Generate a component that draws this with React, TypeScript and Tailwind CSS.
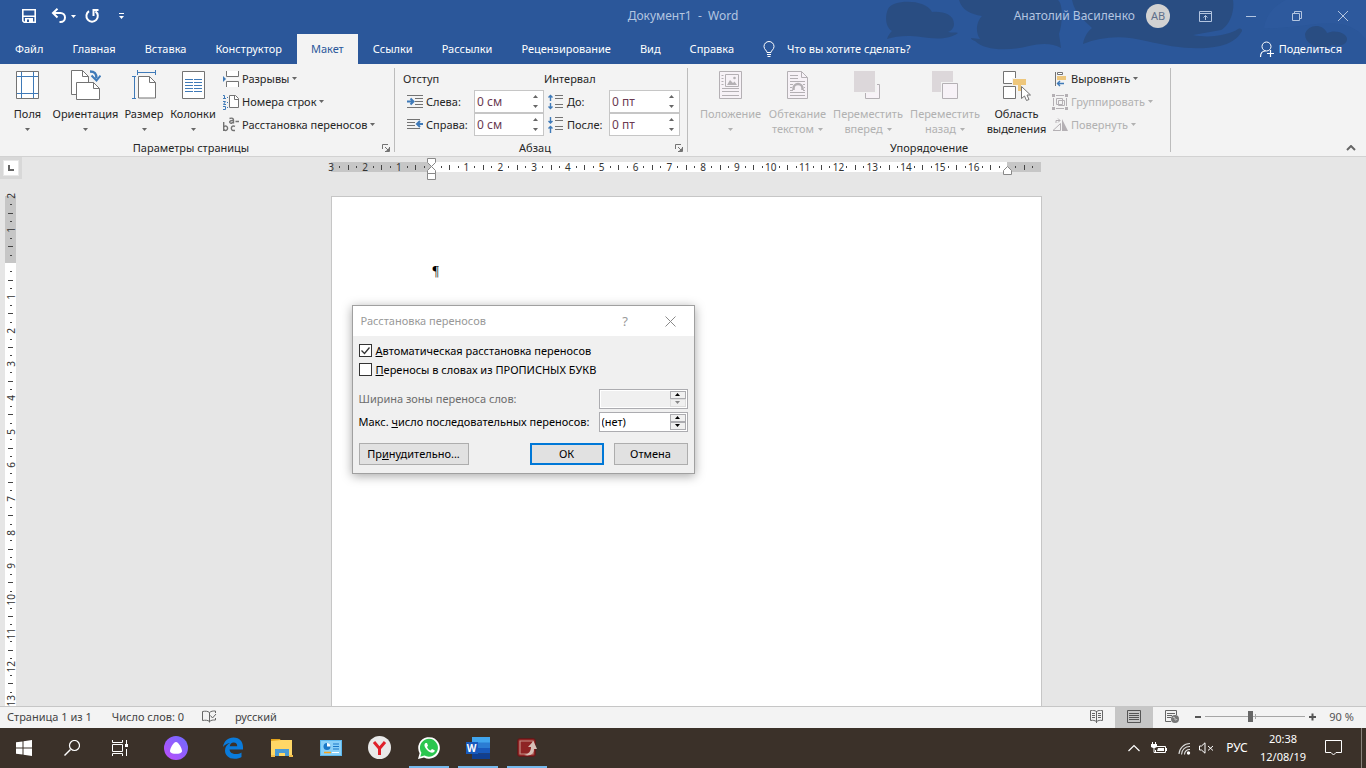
import { ReactNode } from 'react';

const Tabs = ['Файл', 'Главная', 'Вставка', 'Конструктор', 'Макет', 'Ссылки', 'Рассылки', 'Рецензирование', 'Вид', 'Справка'];

// Labels for every centimetre, empty where the margin ends

const HorizontalMarks = ['3', '2', '1', '', '1', '2', '3', '4', '5', '6', '7', '8', '9', '10', '11', '12', '13', '14', '15', '16', ''];
const VerticalMarks = ['2', '1', '', '1', '2', '3', '4', '5', '6', '7', '8', '9', '10', '11', '12', '13'];

interface IconProps {

    W: number;

    H: number;

    children: ReactNode;

}

function Icon({ W, H, children }: IconProps) {

    return (

        <svg width={W} height={H} viewBox={`0 0 ${W} ${H}`} fill="none" className="shrink-0" aria-hidden="true">
            {children}
        </svg>

    );

}

function Caret() {

    return (

        <svg width="5" height="3" viewBox="0 0 5 3" className="shrink-0" aria-hidden="true">
            <path d="M0 0h5L2.500 3z" fill="currentColor" />
        </svg>

    );

}

const Dim = '#b4b0b4';

const MarginsIcon = (
    <Icon W={24} H={30}>
        <path d="M.5 1.500h22v27H.5z" fill="#fff" stroke="#737373" />
        <path d="M5.500 2v26M17.500 2v26M1 6.500h21M1 23.500h21" stroke="#3f7ab8" />
    </Icon>
);

const OrientationIcon = (
    <Icon W={30} H={32}>
        <path d="M5 24.500H.5v-24h11l6 6V12" fill="#fff" stroke="#737373" />
        <path d="M11.500.5v6h6" stroke="#737373" />
        <path d="M5.500 12.500h17l6 6v11h-23z" fill="#fff" stroke="#737373" />
        <path d="M22.500 12.500v6h6" stroke="#737373" />
        <path d="M19 1.500c5 0 6.500 2 6.500 7" stroke="#3f7ab8" strokeWidth="2.500" />
        <path d="M20.500 5.500l5 5 4-5" stroke="#3f7ab8" strokeWidth="2" />
    </Icon>
);

const SizeIcon = (
    <Icon W={25} H={31}>
        <path d="M5 2.500h19M5.500 0v5M23.500 0v5M2.500 7v22M0 6.500h4M0 28.500h4" stroke="#3f7ab8" />
        <path d="M6.500 6.500h11l6 6v15.500h-17z" fill="#fff" stroke="#737373" />
        <path d="M17.500 6.500v6h6" stroke="#737373" />
    </Icon>
);

const ColumnsIcon = (
    <Icon W={23} H={30}>
        <path d="M.5 1.500h22v27H.5z" fill="#fff" stroke="#737373" />
        <path d="M3 9.500h8M12 9.500h8M3 12.500h8M12 12.500h8M3 15.500h8M12 15.500h8M3 18.500h8M12 18.500h8M3 21.500h8M12 21.500h8" stroke="#3f7ab8" />
    </Icon>
);

const BreaksIcon = (
    <Icon W={16} H={16}>
        <path d="M3.500 0v5.500h12V0M3.500 16v-5.500h12V16" fill="#fff" stroke="#737373" />
        <path d="M0 5l3 3-3 3z" fill="#3f7ab8" />
        <path d="M4 8h12" stroke="#fff" />
    </Icon>
);

const LineNumbersIcon = (
    <Icon W={16} H={16}>
        <path d="M6.500 1.500h6l3 3v9h-9z" fill="#fff" stroke="#737373" />
        <path d="M11.500 1.500v4h4" stroke="#737373" />
        <path d="M0 1.500h1.500V5M0 4.500h3M0 7.500h2.500L.5 10.500H3M0 12.500h2.500v3H0" stroke="#3f7ab8" />
        <path d="M4 3.500h2M4 8.500h2M4 13.500h2" stroke="#3f7ab8" strokeDasharray="1 1" />
    </Icon>
);

const HyphenationIcon = (
    <Icon W={16} H={16}>
        <path d="M.7 5v9M.7 10.500a2 2.200 0 1 1 0 1.500M12 9.300c-4-1.800-5 4.200-1.500 4.200H12M6.500 1.500c3-1 4 0 4 1.500v3.500M10.500 3.500c-5-.5-4.500 3-2 2.700l2-1.200M12.500 4.500H16" stroke="#737373" strokeWidth="1.400" />
    </Icon>
);

const IndentLeftIcon = (
    <Icon W={16} H={14}>
        <path d="M0 .5h16M8 3.500h8M8 6.500h8M8 9.500h8M0 12.500h16" stroke="#737373" />
        <path d="M0 6.500h6M3.500 3.500l3 3-3 3" stroke="#3f7ab8" strokeWidth="2" />
    </Icon>
);

const IndentRightIcon = (
    <Icon W={16} H={14}>
        <path d="M0 1.500h13M0 4.500h8M0 7.500h8M0 10.500h13" stroke="#737373" />
        <path d="M10 6h6M13 3l-3 3 3 3" stroke="#3f7ab8" strokeWidth="2" />
    </Icon>
);

const SpaceBeforeIcon = (
    <Icon W={16} H={16}>
        <path d="M7 1.500h8M7 4.500h8M7 10.500h8M7 13.500h8" stroke="#737373" />
        <path d="M2.500 1v6M.5 3.500l2-2 2 2M2.500 9v6M.5 12.500l2 2 2-2" stroke="#3f7ab8" strokeWidth="1.400" />
    </Icon>
);

const SpaceAfterIcon = (
    <Icon W={16} H={16}>
        <path d="M7 .5h8M7 3.500h8M7 9.500h8M7 12.500h8" stroke="#737373" />
        <path d="M2.500 0v6M.5 4l2 2 2-2M2.500 9v7M.5 11.500l2-2 2 2" stroke="#3f7ab8" strokeWidth="1.400" />
    </Icon>
);

const PositionIcon = (
    <Icon W={24} H={30}>
        <path d="M.5 1.500h22v27H.5z" fill="#f7f2f7" stroke={Dim} />
        <path d="M6.500 4.500h13v12h-13z" stroke={Dim} />
        <path d="M8 15l3-5 3 3 1.500-1.500L18 15z" fill={Dim} />
        <circle cx="15.500" cy="8" r="1.300" fill={Dim} />
        <path d="M2.500 5.500h2M2.500 8.500h2M2.500 11.500h2M2.500 14.500h2M3 18.500h17M3 21.500h17M3 25.500h17" stroke={Dim} />
    </Icon>
);

const WrapIcon = (
    <Icon W={24} H={30}>
        <path d="M1.500 1.500h14l6 6v21h-20z" fill="#f7f2f7" stroke={Dim} />
        <path d="M15.500 1.500v6h6M4 5.500h8M4 8.500h8M4 11.500h15M4 25.500h15M4 22.500h15M4 14.500h3M17 14.500h2M4 17.500h2M18 17.500h1M4 20.500h3M17 20.500h2" stroke={Dim} />
        <path d="M7.500 20v-1.500a4.500 4.500 0 0 1 9 0V20" stroke={Dim} strokeWidth="2.500" />
    </Icon>
);

const ForwardIcon = (
    <Icon W={28} H={30}>
        <path d="M11.500 14.500h14v14h-14z" fill="#f7f2f7" stroke={Dim} />
        <path d="M0 0h23v23H0z" fill="#f3f3f3" />
        <path d="M0 1h21v21H0z" fill="#dcd7da" />
    </Icon>
);

const BackwardIcon = (
    <Icon W={28} H={30}>
        <path d="M1 1h21v21H1z" fill="#dcd7da" />
        <path d="M10 12h17v17H10z" fill="#f3f3f3" />
        <path d="M11.500 13.500h15v15h-15z" fill="#f7f2f7" stroke={Dim} />
    </Icon>
);

const SelectionIcon = (
    <Icon W={28} H={32}>
        <path d="M.5 1.500h12v12H.5zM.5 16.500h12v12H.5z" fill="#fff" stroke="#737373" />
        <path d="M9 8h15v8h-5v6h-5v-6H9z" fill="#f3f3f3" />
        <path d="M10 9h13v6h-5v6h-3v-6h-5z" fill="#eec77c" />
        <path d="M18.500 16.500v12l3-2.500 2 4.500 2.500-1-2-4.500h3.500z" fill="#fff" stroke="#737373" />
    </Icon>
);

const AlignIcon = (
    <Icon W={16} H={16}>
        <path d="M3.500 1v14" stroke="#737373" />
        <path d="M5.500 1.500h5v2h-5z" fill="#fff" stroke="#737373" />
        <path d="M5 5h9v4H5z" fill="#eec77c" />
        <path d="M5 12.500h7M8 10l-2.500 2.500L8 15" stroke="#3f7ab8" strokeWidth="1.400" />
    </Icon>
);

const GroupIcon = (
    <Icon W={16} H={16}>
        <path d="M4.500 4.500h6v6h-6zM6.500 6.500h6v5h-6zM4 1.500h8M4 14.500h8M1.500 4v8M14.500 4v8" stroke={Dim} />
        <path d="M0 0h3v3H0zM13 0h3v3h-3zM0 13h3v3H0zM13 13h3v3h-3z" fill={Dim} />
    </Icon>
);

const RotateIcon = (
    <Icon W={16} H={14}>
        <path d="M1 12.500h7.500v-7z" stroke={Dim} />
        <path d="M10 1v12h6z" fill={Dim} />
        <path d="M4 5V2.500h4M6 .5l2 2-2 2" stroke={Dim} />
    </Icon>
);

function TitleBar() {

    return (

        <div className="relative grid h-8 grid-cols-[1fr_auto_1fr] items-center text-[12px] text-[#b3c5e0]">

            <div className="flex items-center text-white">
                <button aria-label="Сохранить" className="ml-[21px]">
                    <Icon W={16} H={16}>
                        <path d="M1.800 1.800h12.400v12.400H3.200l-1.400-1.400z" stroke="#fff" strokeWidth="1.600" />
                        <path d="M2 7.500h12v1.500H2zM4 10h8v4H4z" fill="#fff" />
                        <path d="M6 11.500h2V14H6z" fill="#2b579a" />
                    </Icon>
                </button>
                <button aria-label="Отменить" className="ml-[14px] flex items-center gap-1">
                    <Icon W={16} H={16}>
                        <path d="M2 5h7.500a4.300 4.300 0 0 1 0 9H8.500M6.500.800L2 5l4.500 4.500" stroke="#fff" strokeWidth="2" />
                    </Icon>
                    <Caret />
                </button>
                <button aria-label="Повторить" className="ml-2">
                    <Icon W={16} H={16}>
                        <path d="M5 3.200a5.700 5.700 0 1 0 6.500.2M9.500 8V2h5" stroke="#fff" strokeWidth="2" />
                    </Icon>
                </button>
                <button aria-label="Настройка панели быстрого доступа" className="ml-[18px]">
                    <Icon W={7} H={7}>
                        <path d="M1 .5h5" stroke="#fff" />
                        <path d="M1 3h5L3.500 6z" fill="#fff" />
                    </Icon>
                </button>
            </div>

            <div className="whitespace-pre">Документ1  -  Word</div>

            <div className="flex items-center justify-end">
                <span className="mr-[11px] whitespace-nowrap">Анатолий Василенко</span>
                <span className="mr-3 flex size-6 items-center justify-center rounded-full bg-[#d2d2d2] text-[11px] text-[#5f6f8a]">АВ</span>
                <button aria-label="Параметры ленты" className="flex w-[46px] justify-center">
                    <Icon W={13} H={11}>
                        <path d="M.5.500h12v10H.5zM.5 2.500h12M6.500 9V4.500M4.500 6.500l2-2 2 2" stroke="currentColor" />
                    </Icon>
                </button>
                <button aria-label="Свернуть" className="flex w-[46px] justify-center">
                    <Icon W={10} H={10}><path d="M0 5.500h10" stroke="currentColor" /></Icon>
                </button>
                <button aria-label="Восстановить" className="flex w-[46px] justify-center">
                    <Icon W={10} H={10}><path d="M.5 2.500h7v7h-7zM2.500 2V.5h7v7H8" stroke="currentColor" /></Icon>
                </button>
                <button aria-label="Закрыть" className="flex w-[46px] justify-center">
                    <Icon W={10} H={10}><path d="M0 0l10 10M10 0L0 10" stroke="currentColor" /></Icon>
                </button>
            </div>

        </div>

    );

}

function Header() {

    return (

        <header className="relative bg-[#2b579a]">

            {/* Cloud pattern of the window frame */}

            <svg className="absolute top-0 right-0" width="506" height="64" viewBox="0 0 506 64" aria-hidden="true">
                <path d="M404 28c4-32 50-40 62-28h40v40c-20-30-60-10-102-12z" fill="#3461a8" opacity=".25" />
                <g fill="#294d82">
                    <path d="M28 9c5-10 38-10 44 3 10-1 22 2 22 12 0 4-3 7-6 8 4 1 8 0 10 1-9 7-24 6-37 4-14-2-24-1-34 2 1-4 4-7 5-8-7-4-7-15-4-22z" />
                    <path d="M99 0h99c5 4 5 22 1 34l2 14c-8-5-20-5-32-2-20 5-44 5-54-5-3-1-4-2-4-3l9 1c-6-9-2-19 2-23-12-2-20-6-23-16z" />
                    <path d="M212 0h161c2 12-4 26-12 30l-28 5c18 4 38-1 45-6 3-1 4 0 4 2-4 8-13 13-22 15-24 5-48 1-74-5-22-6-44-5-63 3 1-7 5-13 9-16-8-8-17-14-20-28z" />
                    <path d="M445 34c3-10 18-11 22-1 8-4 20 0 20 6 0 6-8 8-15 6-8 6-27 2-27-11z" />
                </g>
            </svg>

            <TitleBar />

            <nav className="relative flex h-8 items-end gap-px pl-px text-white">

                {Tabs.map((Tab) => (

                    <button key={Tab} className={`h-[30px] px-[14px] ${Tab == 'Макет' ? 'bg-[#f3f3f3] text-[#2b579a]' : 'text-white'}`}>
                        {Tab}
                    </button>

                ))}

                <button className="ml-[14px] flex h-[30px] items-center gap-3">
                    <Icon W={12} H={16}>
                        <path d="M4 11.500c0-2-3-3-3-6a5 5 0 0 1 10 0c0 3-3 4-3 6zM4 13.500h4M4.500 15.500h3" stroke="#fff" />
                    </Icon>
                    Что вы хотите сделать?
                </button>

                <button className="mr-6 ml-auto flex h-[30px] items-center gap-1">
                    <Icon W={16} H={16}>
                        <circle cx="7.500" cy="5.500" r="4.500" stroke="#fff" />
                        <path d="M1.500 16c0-4 2-6 5-6M8 12.500h7M11.500 9v7" stroke="#fff" strokeWidth="1.200" />
                    </Icon>
                    Поделиться
                </button>

            </nav>

        </header>

    );

}

interface BigButtonProps {

    Glyph: ReactNode;

    Lines: string[];

    Disabled?: boolean;

    HasCaret?: boolean;

}

function BigButton({ Glyph, Lines, Disabled = false, HasCaret = true }: BigButtonProps) {

    return (

        <button disabled={Disabled} className={`flex flex-col items-center whitespace-nowrap leading-4 ${Disabled ? 'text-[#b1b1b1]' : 'text-[#262626]'}`}>

            <span className="mb-1 flex h-8">{Glyph}</span>

            <span>{Lines[0]}</span>

            <span className="flex h-[14px] items-center gap-1">
                {Lines[1]}
                {HasCaret && <span className={Disabled ? 'text-[#b1b1b1]' : 'text-[#666]'}><Caret /></span>}
            </span>

        </button>

    );

}

function SmallButton({ Glyph, Label, Disabled = false }: { Glyph: ReactNode; Label: string; Disabled?: boolean }) {

    return (

        <button disabled={Disabled} className={`flex h-[23px] items-center gap-[3px] whitespace-nowrap ${Disabled ? 'text-[#b1b1b1]' : 'text-[#262626]'}`}>
            {Glyph}
            {Label}
            <span className={Disabled ? 'text-[#b1b1b1]' : 'text-[#666]'}><Caret /></span>
        </button>

    );

}

function GroupTitle({ Text, Launcher = true }: { Text: string; Launcher?: boolean }) {

    return (

        <div className="flex h-4 items-center text-[#262626]">
            <span className="flex-1 text-center">{Text}</span>
            {Launcher && (
                <button aria-label={`Параметры: ${Text}`} className="mr-1">
                    <Icon W={8} H={8}>
                        <path d="M.5 5V.5H6M3 3l3.500 3.500M7.500 3v4.500H3" stroke="#737373" />
                        <path d="M4 7h3V4z" fill="#737373" />
                    </Icon>
                </button>
            )}
        </div>

    );

}

function Separator() {

    return <i className="mt-px mb-1 w-px bg-[#bcbcbc]" />;

}

function SpinField({ Id, Glyph, Label, Value }: { Id: string; Glyph: ReactNode; Label: string; Value: string }) {

    return (

        <>
            <label htmlFor={Id} className="flex items-center gap-[3px] whitespace-nowrap">
                {Glyph}
                {Label}
            </label>

            <div className="flex h-[23px] border border-[#c6c6c6] bg-white">
                <input id={Id} defaultValue={Value} className="w-0 flex-1 px-0.5 text-[12px] text-[#6b3a52] outline-none" />
                <div className="flex w-4 flex-col items-center justify-between py-1 text-[#666]">
                    <button aria-label="Увеличить" className="rotate-180"><Caret /></button>
                    <button aria-label="Уменьшить"><Caret /></button>
                </div>
            </div>
        </>

    );

}

function Ribbon() {

    return (

        <section className="flex h-[93px] border-b border-[#d2d2d2] bg-[#f3f3f3] pt-[3px]">

            <div className="flex w-[394px] flex-col justify-between">

                <div className="flex">
                    <div className="grid grid-cols-[45px_71px_46px_52px] pt-[3px] pl-[5px]">
                        <BigButton Glyph={MarginsIcon} Lines={['Поля']} />
                        <BigButton Glyph={OrientationIcon} Lines={['Ориентация']} />
                        <BigButton Glyph={SizeIcon} Lines={['Размер']} />
                        <BigButton Glyph={ColumnsIcon} Lines={['Колонки']} />
                    </div>
                    <div className="ml-1">
                        <SmallButton Glyph={BreaksIcon} Label="Разрывы" />
                        <SmallButton Glyph={LineNumbersIcon} Label="Номера строк" />
                        <SmallButton Glyph={HyphenationIcon} Label="Расстановка переносов" />
                    </div>
                </div>

                <GroupTitle Text="Параметры страницы" />

            </div>

            <Separator />

            <div className="flex w-[292px] flex-col justify-between">

                <div className="grid grid-cols-[63px_70px_57px_71px] gap-x-1 pl-3 text-[#262626]">
                    <span className="col-span-2 -ml-1 h-[23px] leading-[23px]">Отступ</span>
                    <span className="col-span-2 -ml-1 h-[23px] leading-[23px]">Интервал</span>
                    <SpinField Id="indent-left" Glyph={IndentLeftIcon} Label="Слева:" Value="0 см" />
                    <SpinField Id="space-before" Glyph={SpaceBeforeIcon} Label="До:" Value="0 пт" />
                    <SpinField Id="indent-right" Glyph={IndentRightIcon} Label="Справа:" Value="0 см" />
                    <SpinField Id="space-after" Glyph={SpaceAfterIcon} Label="После:" Value="0 пт" />
                </div>

                <GroupTitle Text="Абзац" />

            </div>

            <Separator />

            <div className="flex w-[482px] flex-col justify-between">

                <div className="flex">
                    <div className="grid grid-cols-[69px_65px_76px_78px_65px] pt-[3px] pl-2">
                        <BigButton Glyph={PositionIcon} Lines={['Положение']} Disabled />
                        <BigButton Glyph={WrapIcon} Lines={['Обтекание', 'текстом']} Disabled />
                        <BigButton Glyph={ForwardIcon} Lines={['Переместить', 'вперед']} Disabled />
                        <BigButton Glyph={BackwardIcon} Lines={['Переместить', 'назад']} Disabled />
                        <BigButton Glyph={SelectionIcon} Lines={['Область', 'выделения']} HasCaret={false} />
                    </div>
                    <div className="ml-[3px]">
                        <SmallButton Glyph={AlignIcon} Label="Выровнять" />
                        <SmallButton Glyph={GroupIcon} Label="Группировать" Disabled />
                        <SmallButton Glyph={RotateIcon} Label="Повернуть" Disabled />
                    </div>
                </div>

                <GroupTitle Text="Упорядочение" Launcher={false} />

            </div>

            <Separator />

            <button aria-label="Свернуть ленту" className="mr-[10px] mb-[5px] ml-auto self-end">
                <Icon W={10} H={6}><path d="M1 5l4-4 4 4" stroke="#666" strokeWidth="2" /></Icon>
            </button>

        </section>

    );

}

function HorizontalRuler() {

    return (

        <div className="relative flex h-[10px] w-[710px] text-[10px] leading-[10px] text-[#333]">

            {HorizontalMarks.map((Mark, Index) => (

                <div key={Index} className={`w-0 flex-1 ${Index < 3 || Index == 20 ? 'bg-[#c6c6c6]' : 'bg-white'}`}>

                    <div className="mr-1 -ml-1 grid h-full grid-cols-4 items-center justify-items-center">
                        <span className="flex w-0 justify-center">{Mark}</span>
                        <i className="h-0.5 w-px bg-[#444]" />
                        <i className="h-[5px] w-px bg-[#444]" />
                        <i className="h-0.5 w-px bg-[#444]" />
                    </div>

                </div>

            ))}

            {/* Indent markers */}

            <svg className="absolute -top-1 left-[96px]" width="9" height="22" viewBox="0 0 9 22" aria-hidden="true">
                <path d="M.5.500h8v4l-4 4-4-4zM.5 15.500v-3l4-4 4 4v3zM.5 15.500h8v6h-8z" fill="#fff" stroke="#888" />
            </svg>

            <svg className="absolute top-1 right-[29px]" width="9" height="9" viewBox="0 0 9 9" aria-hidden="true">
                <path d="M.5 8.500v-4l4-4 4 4v4z" fill="#fff" stroke="#888" />
            </svg>

        </div>

    );

}

function VerticalRuler() {

    return (

        <div className="flex h-[538px] w-[11px] shrink-0 flex-col text-[10px] leading-[10px] text-[#333]">

            {VerticalMarks.map((Mark, Index) => (

                <div key={Index} className={`h-0 flex-1 ${Index < 2 ? 'bg-[#c6c6c6]' : 'bg-white'}`}>

                    <div className="-mt-1 grid h-full grid-rows-4 items-center justify-items-center">
                        <span className="flex h-0 items-center">
                            <span className="rotate-180 [writing-mode:vertical-rl]">{Mark}</span>
                        </span>
                        <i className="h-px w-0.5 bg-[#444]" />
                        <i className="h-px w-[5px] bg-[#444]" />
                        <i className="h-px w-0.5 bg-[#444]" />
                    </div>

                </div>

            ))}

        </div>

    );

}

function DialogSpin({ Id, Value, Disabled = false }: { Id: string; Value: string; Disabled?: boolean }) {

    return (

        <div className="flex h-5 w-[89px] border border-[#acacb0] bg-white p-px">
            <input id={Id} defaultValue={Value} disabled={Disabled} className="w-0 flex-1 px-px text-black outline-none disabled:bg-[#f0f0f0]" />
            <div className="flex w-4 flex-col">
                <button aria-label="Больше" className="flex flex-1 items-center justify-center border border-[#acacb0] bg-[#f0f0f0] text-black"><span className="rotate-180"><Caret /></span></button>
                <button aria-label="Меньше" disabled={Disabled} className="flex flex-1 items-center justify-center border border-[#acacb0] bg-[#f0f0f0] text-black disabled:border-[#ddd] disabled:text-[#888]"><Caret /></button>
            </div>
        </div>

    );

}

function DialogCheck({ Checked, Hot, Rest }: { Checked: boolean; Hot: string; Rest: string }) {

    return (

        <label className="flex h-[19px] items-center gap-1">
            <span className="relative flex">
                <input type="checkbox" defaultChecked={Checked} className="peer size-[13px] appearance-none border border-[#333] bg-white" />
                <svg className="pointer-events-none absolute inset-0 hidden peer-checked:block" width="13" height="13" viewBox="0 0 13 13" aria-hidden="true">
                    <path d="M2.500 6.500l3 3 5-6" fill="none" stroke="#333" strokeWidth="1.300" />
                </svg>
            </span>
            <span><u>{Hot}</u>{Rest}</span>
        </label>

    );

}

function HyphenationDialog() {

    return (

        <div role="dialog" aria-label="Расстановка переносов" className="absolute top-[108px] left-5 w-[343px] border border-[#a0a0a0] bg-[#f0f0f0] text-black shadow-[0_2px_10px_rgba(0,0,0,0.35)]">

            <div className="flex h-[30px] items-center bg-white pl-2 text-[#999]">
                Расстановка переносов
                <button aria-label="Справка" className="ml-auto w-[45px] text-[13px]">?</button>
                <button aria-label="Закрыть" className="flex w-[46px] justify-center">
                    <Icon W={11} H={11}><path d="M.5.500l10 10M10.500.5l-10 10" stroke="#8a8a8a" /></Icon>
                </button>
            </div>

            <div className="px-[6px] pt-[5px] pb-2">

                <DialogCheck Checked Hot="А" Rest="втоматическая расстановка переносов" />
                <DialogCheck Checked={false} Hot="П" Rest="ереносы в словах из ПРОПИСНЫХ БУКВ" />

                <div className="mt-2 flex h-[23px] items-center justify-between text-[#6d6d6d]">
                    <label htmlFor="zone">Ширина зоны переноса слов:</label>
                    <DialogSpin Id="zone" Value="" Disabled />
                </div>

                <div className="flex h-[23px] items-center justify-between whitespace-nowrap">
                    <label htmlFor="limit">Макс. <u>ч</u>исло последовательных переносов:</label>
                    <DialogSpin Id="limit" Value="(нет)" />
                </div>

                <div className="mt-[10px] flex">
                    <button className="h-[22px] w-[110px] border border-[#adadad] bg-[#e1e1e1]">Пр<u>и</u>нудительно...</button>
                    <button className="mr-[10px] ml-auto h-[22px] w-[74px] border-2 border-[#0078d7] bg-[#e1e1e1]">ОК</button>
                    <button className="h-[22px] w-[74px] border border-[#adadad] bg-[#e1e1e1]">Отмена</button>
                </div>

            </div>

        </div>

    );

}

function Workspace() {

    return (

        <main className="flex min-h-0 flex-1 overflow-hidden bg-[#e6e6e6]">

            <div className="flex w-[22px] flex-col">
                <button aria-label="Табуляция" className="mb-[17px] flex h-[22px] w-full shrink-0 items-center justify-center bg-[#d8d8d8]">
                    <span className="flex size-4 items-center justify-center border border-[#e8e8e8] bg-white">
                        <Icon W={6} H={6}><path d="M1 0v5h5" stroke="#666" strokeWidth="2" /></Icon>
                    </span>
                </button>
                <div className="flex min-h-0 flex-1 pl-[5px]">
                    <VerticalRuler />
                </div>
            </div>

            <div className="flex flex-1 flex-col items-center pt-[5px] pr-4">
                <HorizontalRuler />
                <div className="relative mt-6 w-[711px] flex-1 border border-b-0 border-[#c6c6c6] bg-white">
                    <p className="pt-[67px] pl-[101px] font-['Liberation_Serif',serif] text-[14px] leading-4 text-black">¶</p>
                    <HyphenationDialog />
                </div>
            </div>

        </main>

    );

}

function StatusBar() {

    return (

        <footer className="flex h-[22px] items-stretch border-t border-[#c6c6c6] bg-[#f3f3f3] text-[#444]">

            <div className="flex items-center pb-0.5 pl-[7px]">
                <span>Страница 1 из 1</span>
                <span className="ml-5">Число слов: 0</span>
                <button aria-label="Проверка правописания" className="mx-[18px]">
                    <Icon W={15} H={13}>
                        <path d="M7.500 11.500c-2-1.500-4-1.500-7-1v-9c3-.5 5-.5 7 1v10M7.500 2.500c2-1.500 3-1.500 6-1.500v2M7.500 11.500c2-1.500 3-1.500 6-1.500V8M8.500 5.500l2 2.500 3.500-4" stroke="#666" />
                    </Icon>
                </button>
                <span>русский</span>
            </div>

            <div className="ml-auto flex items-stretch">
                <button aria-label="Режим чтения" className="flex w-[38px] items-center justify-center pb-0.5">
                    <Icon W={13} H={13}>
                        <path d="M6.500 11.500c-2-1-3-1.500-6-1V.5c3-.5 4 0 6 1 2-1 3-1.500 6-1v10c-3-.5-4 0-6 1zM6.500 1v12M2 3.500h3M2 5.500h3M2 7.500h3M8 3.500h3M8 5.500h3M8 7.500h3" stroke="#666" />
                    </Icon>
                </button>
                <button aria-label="Разметка страницы" className="flex w-[38px] items-center justify-center bg-[#c6c6c6] pb-0.5">
                    <Icon W={14} H={13}>
                        <path d="M.5.500h13v12H.5zM2 3.500h10M2 5.500h10M2 7.500h10M2 9.500h10" stroke="#555" />
                    </Icon>
                </button>
                <button aria-label="Веб-документ" className="flex w-[38px] items-center justify-center pb-0.5">
                    <Icon W={14} H={13}>
                        <path d="M6 11.500H.5V.5h11V5M2 3.500h8M2 5.500h5M2 7.500h4" stroke="#666" />
                        <circle cx="10" cy="9" r="4" fill="#777" />
                        <path d="M8 8c1-2 2 0 2 1s1 2 2 0" stroke="#ddd" />
                    </Icon>
                </button>
                <div className="ml-1 flex items-center pb-0.5 text-[#555]">
                    <button aria-label="Уменьшить масштаб"><Icon W={6} H={2}><path d="M0 1h6" stroke="#555" strokeWidth="2" /></Icon></button>
                    <span className="relative mx-1 flex w-[100px]">
                        <input type="range" aria-label="Масштаб" min={0} max={100} defaultValue={45} className="h-[11px] w-full appearance-none bg-[linear-gradient(#a6a6a6,#a6a6a6)] bg-[length:100%_1px] bg-center bg-no-repeat [&::-webkit-slider-thumb]:h-[11px] [&::-webkit-slider-thumb]:w-[5px] [&::-webkit-slider-thumb]:appearance-none [&::-webkit-slider-thumb]:bg-[#666]" />
                        <i className="absolute top-[3px] left-1/2 h-[5px] w-px bg-[#a6a6a6]" />
                    </span>
                    <button aria-label="Увеличить масштаб"><Icon W={8} H={8}><path d="M0 4h7M3.500.5v7" stroke="#555" strokeWidth="2" /></Icon></button>
                    <button className="w-[49px] text-center">90 %</button>
                </div>
            </div>

        </footer>

    );

}

const PinnedApps: { Name: string; Open?: boolean; Glyph: ReactNode }[] = [

    {
        Name: 'Edge',
        Glyph: (
            <Icon W={22} H={22}>
                <path d="M1 10C2 4 6 .5 11.500.5 18 .5 21 5 21 10v2.500H7.500c.3 3 3 4.500 6 4.500 2.500 0 4.500-.7 6-1.600v4.500C18 21 15.500 21.800 12.500 21.800 6.500 21.800 3 18 3 13.500 3 10 5 7.500 8 6 5 6.500 2.500 8 1 10zm6.800-.8h7.400C15.200 6.800 14 5.500 11.700 5.500 9.500 5.500 8 7 7.800 9.200z" fill="#0a7bdb" />
            </Icon>
        ),
    },
    {
        Name: 'Проводник',
        Glyph: (
            <Icon W={22} H={20}>
                <path d="M0 1h9l1 2H0z" fill="#e2a31c" />
                <path d="M0 3l10-1h11v16H0z" fill="#ffd766" />
                <path d="M4 18v-7h14v7h-4v-3H8v3z" fill="#4a9bd6" />
                <path d="M0 17h4v2H0zM18 17h4v2h-4z" fill="#f3bd4a" />
            </Icon>
        ),
    },
    {
        Name: 'Панель управления',
        Glyph: (
            <Icon W={22} H={16}>
                <path d="M0 0h22v16H0z" fill="#5cb8ee" />
                <path d="M1 1h20v14H1z" fill="#8ad0f8" />
                <circle cx="7" cy="6.500" r="3.500" fill="#1a78c8" />
                <path d="M7 6.500V3a3.500 3.500 0 0 1 3.500 3.500z" fill="#fff" />
                <path d="M13 4h6M13 6.500h6M13 9h6" stroke="#1a78c8" />
                <path d="M4 12.500h7" stroke="#f6a31c" strokeWidth="1.500" />
                <path d="M12 12.500h7" stroke="#fff" />
            </Icon>
        ),
    },
    {
        Name: 'Яндекс',
        Glyph: (
            <Icon W={23} H={23}>
                <circle cx="11.500" cy="11.500" r="11.500" fill="#e9e9e9" />
                <path d="M6 6l5.500 6.500V19M17 6l-5.500 6.500" stroke="#e0202a" strokeWidth="3" />
            </Icon>
        ),
    },
    {
        Name: 'WhatsApp',
        Open: true,
        Glyph: (
            <Icon W={22} H={22}>
                <path d="M0 22l1.600-5.800A10.800 10.800 0 1 1 6 20.500z" fill="#fff" />
                <path d="M2.300 19.700l1.100-4A9 9 0 1 1 6.500 18.600z" fill="#2cc64f" />
                <path d="M7.500 6c-1.500 1-1.300 3 0 5 1.500 2.500 4 4.500 6.500 4.700 1.500 0 3-1.200 2.700-2.500L14 12l-1.500 1.500C11 13 9.500 11.500 9 10l1-1.200L9 6z" fill="#fff" />
            </Icon>
        ),
    },
    {
        Name: 'Word',
        Open: true,
        Glyph: (
            <span className="relative flex">
                <Icon W={24} H={22}>
                    <path d="M6 0h18v6H6z" fill="#41a5ee" />
                    <path d="M6 5.500h18V11H6z" fill="#2b7cd3" />
                    <path d="M6 11h18v5.500H6z" fill="#185abd" />
                    <path d="M6 16.500h18V22H6z" fill="#103f91" />
                    <path d="M0 5h12v12H0z" fill="#185abd" />
                </Icon>
                <span className="absolute top-[5px] left-0 w-3 text-center text-[10px] leading-3 font-bold text-white">W</span>
            </span>
        ),
    },
    {
        Name: 'Диспетчер',
        Open: true,
        Glyph: (
            <Icon W={20} H={20}>
                <rect x=".5" y=".5" width="18" height="18" rx="2.500" fill="#8e2424" stroke="#5d1a1a" />
                <path d="M3 3h13v13H3z" stroke="#c58f86" strokeWidth="1.200" />
                <path d="M7 17c5-1 7-4 7-8h-3l5.500-6L20 11h-3c0 5-4 7.500-10 6z" fill="#d8bfb6" />
            </Icon>
        ),
    },

];

function Taskbar() {

    return (

        <div className="flex h-10 items-stretch bg-[#3b3129] text-white">

            <button aria-label="Пуск" className="flex w-12 items-center justify-center">
                <Icon W={16} H={16}><path d="M0 2.300L6.500 1.400v6H0zM7.500 1.200L16 0v7.400H7.500zM0 8.500h6.500v6.100L0 13.700zM7.500 8.500H16V16l-8.500-1.200z" fill="#fff" /></Icon>
            </button>
            <button aria-label="Поиск" className="flex w-12 items-center justify-center">
                <Icon W={16} H={16}><path d="M.5 15.500l6-6" stroke="#fff" strokeWidth="1.400" /><circle cx="10.500" cy="5.500" r="5" stroke="#fff" strokeWidth="1.200" /></Icon>
            </button>
            <button aria-label="Представление задач" className="flex w-12 items-center justify-center">
                <Icon W={17} H={16}>
                    <path d="M.5 0v2.500h10V0M.5 16v-2.500h10V16M.5 4.500h10v7H.5zM14.500 0v4M14.500 9v7" stroke="#fff" />
                    <path d="M13 4h3v3h-3z" fill="#fff" />
                </Icon>
            </button>
            <button aria-label="Алиса" className="flex w-16 items-center justify-center">
                <Icon W={24} H={24}>
                    <defs>
                        <linearGradient id="alice" x1="1" y1="0" x2="0" y2="1">
                            <stop offset="0" stopColor="#6a6cff" />
                            <stop offset="1" stopColor="#c04dfb" />
                        </linearGradient>
                    </defs>
                    <circle cx="12" cy="12" r="12" fill="url(#alice)" />
                    <path d="M12 6c2.500 0 6 6.500 6 9 0 2-3 2.800-6 2.800S6 17 6 15c0-2.500 3.500-9 6-9z" fill="#fff" />
                </Icon>
            </button>

            {PinnedApps.map((App) => (

                <button key={App.Name} aria-label={App.Name} className="flex w-[49px] flex-col items-center">
                    <span className="flex flex-1 items-center pt-px">{App.Glyph}</span>
                    <span className={`h-0.5 w-10 ${App.Open ? 'bg-[#76b9ed]' : ''}`} />
                </button>

            ))}

            <div className="ml-auto flex items-center">
                <button aria-label="Скрытые значки"><Icon W={12} H={8}><path d="M.5 7l5.500-5.500L11.500 7" stroke="#fff" strokeWidth="1.200" /></Icon></button>
                <button aria-label="Батарея" className="ml-[11px]">
                    <Icon W={16} H={13}>
                        <path d="M5 4.500h9.500v6H4.500V8M15.500 6v3M1.500 0v2M4.500 0v2M3 6v4.500h2" stroke="#fff" />
                        <path d="M0 2h6v3L4 6H2L0 5zM7 6h6v3H6z" fill="#fff" />
                    </Icon>
                </button>
                <button aria-label="Wi-Fi" className="ml-[11px]">
                    <Icon W={13} H={13}>
                        <path d="M1 12A11 11 0 0 1 12 1.500M3.500 12.500A8 8 0 0 1 12 4.500M6.500 12.500A5 5 0 0 1 12 7.500" stroke="#ddd" strokeWidth="1.100" />
                        <circle cx="10.500" cy="11" r="1.700" fill="#fff" />
                    </Icon>
                </button>
                <button aria-label="Звук" className="ml-2">
                    <Icon W={15} H={12}><path d="M.5 4h2L6 .8v10.400L2.500 8h-2zM9 4l5 4.500M14 4L9 8.500" stroke="#fff" /></Icon>
                </button>
                <button className="w-[46px] text-center text-[12px]">РУС</button>
                <div className="w-[46px] text-center leading-[18px]">
                    <div>20:38</div>
                    <div>12/08/19</div>
                </div>
                <button aria-label="Уведомления" className="ml-[19px]">
                    <Icon W={17} H={16}><path d="M.5.500h16v12H11l-2.500 2.500L6 12.500H.5z" stroke="#fff" /></Icon>
                </button>
                <button aria-label="Свернуть все окна" className="ml-[19px] h-10 w-[5px] border-l border-[#8a837d]" />
            </div>

        </div>

    );

}

function App() {

    return (

        <div className="flex h-screen flex-col overflow-hidden font-['Noto_Sans','Open_Sans',sans-serif] text-[11px] leading-4">
            <Header />
            <Ribbon />
            <Workspace />
            <StatusBar />
            <Taskbar />
        </div>

    );

}

export default App;
